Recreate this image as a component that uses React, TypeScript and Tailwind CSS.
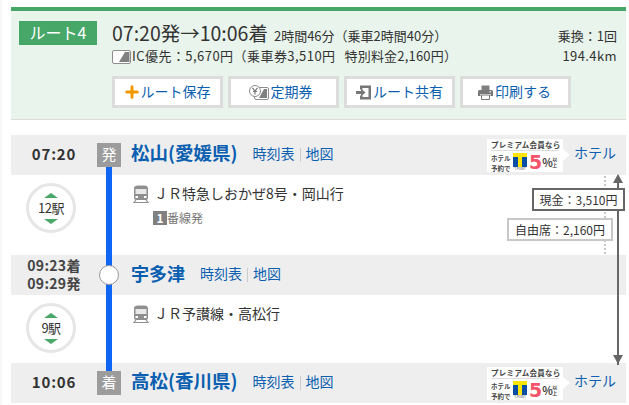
import type { ReactNode } from 'react';
import { Plus } from 'lucide-react';

const FONT = '"Noto Sans CJK JP", "Noto Sans", sans-serif';

function TrainIcon() {
  return (
    <svg width="16" height="18" viewBox="0 0 16 18" className="shrink-0">
      <path d="M5 0.500h6a4 3 0 0 1 4 3V13a2 2 0 0 1-2 2H3a2 2 0 0 1-2-2V3.500a4 3 0 0 1 4-3z" fill="#8f8f8f" />
      <rect x="2.500" y="4" width="11" height="5" fill="#e8e8e8" />
      <rect x="2.500" y="11" width="2.500" height="2" fill="#fff" />
      <rect x="11" y="11" width="2.500" height="2" fill="#fff" />
      <path d="M3 15 1 17.500h14L13 15" fill="none" stroke="#8f8f8f" strokeWidth="1.200" />
    </svg>
  );
}

function IcCard() {
  return (
    <svg width="19" height="14" viewBox="0 0 19 14" className="shrink-0">
      <rect x="0.500" y="0.500" width="18" height="13" rx="1.500" fill="#fff" stroke="#8e8e8e" />
      <path d="M7 12 13 2h4.500v10z" fill="#808080" />
    </svg>
  );
}

function PassIcon() {
  return (
    <svg width="20" height="15" viewBox="0 0 20 15" className="shrink-0 -ml-[4px] mr-[2px]">
      <rect x="5.500" y="2.500" width="14" height="12" rx="1.500" fill="#fff" stroke="#8e8e8e" />
      <path d="M10 13 15 4h3v9z" fill="#808080" />
      <circle cx="6" cy="6" r="5.500" fill="#fff" stroke="#8e8e8e" />
      <path d="M3.500 2.800 6 6l2.500-3.200M6 6v3.500M4 6.500h4" fill="none" stroke="#777" strokeWidth="1.200" />
    </svg>
  );
}

function ShareIcon() {
  return (
    <svg width="15" height="15" viewBox="0 0 15 15" className="shrink-0 ml-[2px] mr-[2px]">
      <path d="M4 0.500h11v14H4v-4h2.500v1.500h6V3h-6v1.500H4z" fill="#777" />
      <path d="M0 6h5V3.500L9.500 7.500 5 11.500V9H0z" fill="#777" />
    </svg>
  );
}

function PrintIcon() {
  return (
    <svg width="15" height="15" viewBox="0 0 15 15" className="shrink-0 mr-[2px]">
      <path d="M3.500 0.500h8V5h-8z" fill="#808080" />
      <path d="M1.500 5h12A1.500 1.500 0 0 1 15 6.500V11h-2.500V9h-10v2H0V6.500A1.500 1.500 0 0 1 1.500 5z" fill="#777" />
      <path d="M3.500 10h8v4.500h-8z" fill="#fff" stroke="#777" />
      <rect x="11.500" y="6.200" width="1.500" height="1.200" fill="#fff" />
    </svg>
  );
}

function ActionButton({ icon, label }: { icon: ReactNode; label: string }) {
  return (
    <div className="w-[111px] h-8 bg-white border-[3px] border-[#dcdcdc] flex items-center justify-center text-[14px] text-[#0b5fb0] pr-[2px]">
      {icon}
      <span className="-translate-y-px">{label}</span>
    </div>
  );
}

function StopCount({ label }: { label: string }) {
  return (
    <div className="w-[50px] h-[50px] rounded-full border-[3px] border-[#e6e6e6] bg-white flex flex-col items-center justify-center">
      <span className="w-0 h-0 border-x-[7px] border-x-transparent border-b-[5px] border-b-[#49a868]" />
      <span className="text-[13px] leading-[21px] text-[#333] tracking-[-0.5px] -translate-y-px">{label}</span>
      <span className="w-0 h-0 border-x-[7px] border-x-transparent border-t-[5px] border-t-[#49a868]" />
    </div>
  );
}

function HotelAd() {
  return (
    <div className="flex items-center ml-auto mr-[9px]">
      <div className="w-[76px] h-[33px] bg-white px-[4px] text-[#444]">
        <div className="text-[7.500px] leading-[11px] font-bold whitespace-nowrap border-b border-[#ddd] tracking-[0.3px]">プレミアム会員なら</div>
        <div className="flex items-start mt-[2px]">
          <div className="text-[6.500px] leading-[10px] font-bold w-[22px] whitespace-nowrap">ホテル<br />予約で</div>
          <div className="w-[14px] flex flex-col items-center">
            <div className="w-[14px] h-[14px] bg-[#ffe600] flex justify-between pt-[4px]">
              <div className="w-[5px] bg-[#0a4fa3]" />
              <div className="w-[5px] bg-[#0a4fa3]" />
            </div>
            <div className="text-[3px] leading-[4px] whitespace-nowrap">T-POINT</div>
          </div>
          <div className="font-['DejaVu_Sans'] text-[19px] leading-[18px] font-bold text-[#f2556a] ml-[2px]">5</div>
          <div className="text-[11px] leading-[18px] font-bold tracking-[-0.5px]">%</div>
          <div className="text-[5px] leading-[6px] font-bold pt-[3px]">以<br />上</div>
        </div>
      </div>
      <span className="w-0 h-0 border-y-[6px] border-y-transparent border-l-[7px] border-l-white" />
      <span className="text-[14px] text-[#0b5fb0] ml-[4px] pr-px -translate-y-[3px]">ホテル</span>
    </div>
  );
}

function StationLinks({ left }: { left: string }) {
  return (
    <>
      <div className={`${left} text-[14px] text-[#0b5fb0] -translate-y-[2px]`}>時刻表</div>
      <div className="mx-[5px] h-[14px] border-l border-[#ccc]" />
      <div className="text-[14px] text-[#0b5fb0] -translate-y-[2px]">地図</div>
    </>
  );
}

function StationRow({ time, badge, name }: { time: string; badge: string; name: string }) {
  return (
    <div className="h-10 bg-[#eeeeee] flex items-center">
      <div className="w-[86px] text-center text-[15px] font-bold text-[#333] tracking-[0.8px] -translate-y-px">{time}</div>
      <div className="relative z-10 w-6 h-6 bg-[#9c9c9c] text-white text-[15px] pb-px flex items-center justify-center">{badge}</div>
      <div className="ml-[10px] text-[18.500px] font-bold text-[#0b5fb0] whitespace-nowrap -translate-y-[2px]">{name}</div>
      <StationLinks left="ml-[15px]" />
      <HotelAd />
    </div>
  );
}

export default function App() {
  return (
    <div className="w-[629px] h-[405px] bg-white overflow-hidden border-l-2 border-[#f8f8f8] pl-[9px] pr-[3px] pt-[7px]" style={{ fontFamily: FONT }}>
      {/* Summary */}
      <div className="h-[113px] bg-[#e9f4ec] border-t-4 border-[#46a768] border-b border-b-[#dcdcdc]">
        <div className="flex pl-2 pt-[10px]">
          <div className="w-[78px] h-6 bg-[#46a768] text-white text-[16px] pb-[2px] flex items-center justify-center">ルート4</div>
          <div className="ml-[15px] flex-1">
            <div className="flex items-baseline h-6 whitespace-nowrap text-[#333]">
              <span className="text-[19.500px] leading-6">07:20発→10:06着</span>
              <span className="text-[13px] ml-[6px]">2時間46分（乗車2時間40分）</span>
              <span className="text-[13px] ml-auto mr-[9px]">乗換：1回</span>
            </div>
            <div className="flex items-center h-[23px] whitespace-nowrap text-[13px] text-[#333]">
              <IcCard />
              <span className="ml-px tracking-[0.45px] -translate-y-px">IC優先：5,670円（乗車券3,510円</span>
              <span className="ml-[9px] tracking-[0.2px] -translate-y-px">特別料金2,160円）</span>
              <span className="ml-auto mr-[9px] tracking-[0.4px] -translate-y-px">194.4km</span>
            </div>
            <div className="flex gap-[5px] mt-[8px]">
              <ActionButton label="ルート保存" icon={<Plus size={18} strokeWidth={4} className="text-[#f39800] shrink-0" />} />
              <ActionButton label="定期券" icon={<PassIcon />} />
              <ActionButton label="ルート共有" icon={<ShareIcon />} />
              <ActionButton label="印刷する" icon={<PrintIcon />} />
            </div>
          </div>
        </div>
      </div>

      {/* Route detail */}
      <div className="relative mt-[15px]">
        <div className="absolute left-[95px] top-[32px] w-[6px] h-[204px] bg-[#0f66f5]" />
        <StationRow time="07:20" badge="発" name="松山(愛媛県)" />
        <div className="h-20 flex">
          <div className="w-[86px] pl-[15px] pt-[8px]"><StopCount label="12駅" /></div>
          <div className="ml-[36px] pt-[8px]">
            <div className="flex items-center gap-[5px] text-[14px] text-[#333] whitespace-nowrap"><TrainIcon />ＪＲ特急しおかぜ8号・岡山行</div>
            <div className="flex items-center ml-[20px] mt-[5px] text-[12px] text-[#777]">
              <span className="w-[14px] h-[14px] bg-[#808080] text-white font-bold flex items-center justify-center">1</span>番線発
            </div>
          </div>
        </div>
        <div className="h-10 bg-[#eeeeee] flex items-center">
          <div className="w-[86px] text-center text-[14px] leading-[18px] font-bold text-[#444] tracking-[0.3px] whitespace-nowrap -translate-y-px">09:23着<br />09:29発</div>
          <div className="relative z-10 ml-[2px] w-[20px] h-[20px] rounded-full bg-white border border-[#999]" />
          <div className="ml-[12px] text-[18px] font-bold text-[#0b5fb0] -translate-y-[2px]">宇多津</div>
          <StationLinks left="ml-[15px]" />
        </div>
        <div className="h-[68px] flex">
          <div className="w-[86px] pl-[15px] pt-[8px]"><StopCount label="9駅" /></div>
          <div className="ml-[36px] pt-[8px]">
            <div className="flex items-center gap-[5px] text-[14px] text-[#333] whitespace-nowrap"><TrainIcon />ＪＲ予讃線・高松行</div>
          </div>
        </div>
        <StationRow time="10:06" badge="着" name="高松(香川県)" />

        {/* Fare overlay */}
        <div className="absolute left-[593px] top-[41px] h-[78px] border-l-[2px] border-dotted border-[#c8c8c8]" />
        <div className="absolute left-[606px] top-[48px] w-[2px] h-[182px] bg-[#666]" />
        <div className="absolute left-[602px] top-[39px] w-0 h-0 border-x-[5px] border-x-transparent border-b-[9px] border-b-[#666]" />
        <div className="absolute left-[602px] top-[220px] w-0 h-0 border-x-[5px] border-x-transparent border-t-[9px] border-t-[#666]" />
        <div className="absolute left-[521px] top-[53px] w-[93px] h-[23px] bg-white border-2 border-[#666] text-[12px] text-[#333] flex items-center justify-center whitespace-nowrap">現金：3,510円</div>
        <div className="absolute left-[496px] top-[83px] w-[106px] h-[23px] bg-white border-2 border-[#c8c8c8] text-[12px] text-[#333] flex items-center justify-center whitespace-nowrap">自由席：2,160円</div>
      </div>
    </div>
  );
}
